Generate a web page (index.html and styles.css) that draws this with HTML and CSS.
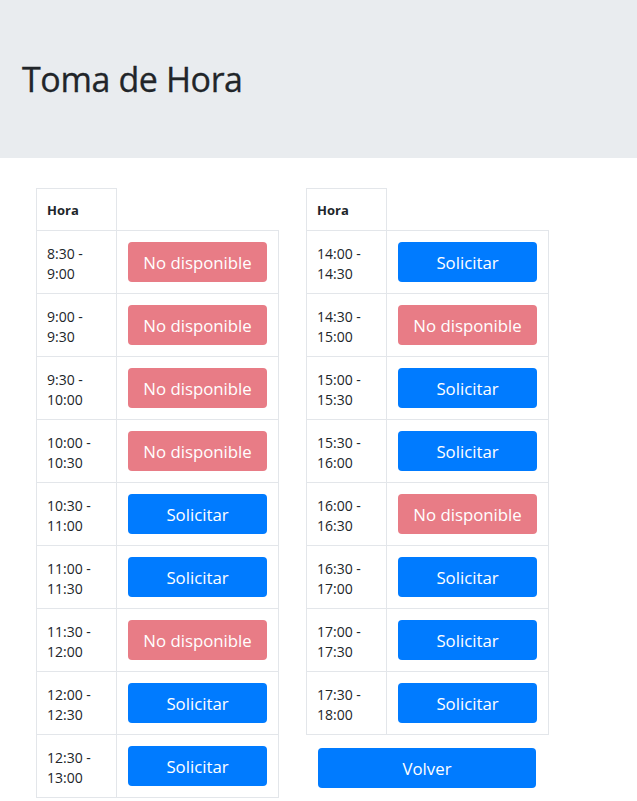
FILE: index.html
```html
<!DOCTYPE html>
<html lang="es">
<head>
<meta charset="utf-8">
<title>Toma de Hora</title>
<link rel="stylesheet" href="styles.css">
</head>
<body>
<header class="jumbo">
  <h1 class="title">Toma de Hora</h1>
</header>
<main class="content">
  <table class="slots">
    <colgroup><col class="c-time"><col class="c-act"></colgroup>
    <thead><tr><th>Hora</th></tr></thead>
    <tbody>
      <tr><td>8:30 - 9:00</td><td><button class="btn btn-off">No disponible</button></td></tr>
      <tr><td>9:00 - 9:30</td><td><button class="btn btn-off">No disponible</button></td></tr>
      <tr><td>9:30 - 10:00</td><td><button class="btn btn-off">No disponible</button></td></tr>
      <tr><td>10:00 - 10:30</td><td><button class="btn btn-off">No disponible</button></td></tr>
      <tr><td>10:30 - 11:00</td><td><button class="btn btn-on">Solicitar</button></td></tr>
      <tr><td>11:00 - 11:30</td><td><button class="btn btn-on">Solicitar</button></td></tr>
      <tr><td>11:30 - 12:00</td><td><button class="btn btn-off">No disponible</button></td></tr>
      <tr><td>12:00 - 12:30</td><td><button class="btn btn-on">Solicitar</button></td></tr>
      <tr><td>12:30 - 13:00</td><td><button class="btn btn-on">Solicitar</button></td></tr>
    </tbody>
  </table>
  <div class="right">
    <table class="slots">
      <colgroup><col class="c-time"><col class="c-act"></colgroup>
      <thead><tr><th>Hora</th></tr></thead>
      <tbody>
        <tr><td>14:00 - 14:30</td><td><button class="btn btn-on">Solicitar</button></td></tr>
        <tr><td>14:30 - 15:00</td><td><button class="btn btn-off">No disponible</button></td></tr>
        <tr><td>15:00 - 15:30</td><td><button class="btn btn-on">Solicitar</button></td></tr>
        <tr><td>15:30 - 16:00</td><td><button class="btn btn-on">Solicitar</button></td></tr>
        <tr><td>16:00 - 16:30</td><td><button class="btn btn-off">No disponible</button></td></tr>
        <tr><td>16:30 - 17:00</td><td><button class="btn btn-on">Solicitar</button></td></tr>
        <tr><td>17:00 - 17:30</td><td><button class="btn btn-on">Solicitar</button></td></tr>
        <tr><td>17:30 - 18:00</td><td><button class="btn btn-on">Solicitar</button></td></tr>
      </tbody>
    </table>
    <div class="back"><button class="btn btn-on btn-wide">Volver</button></div>
  </div>
</main>
</body>
</html>
```
FILE: styles.css
```css
* { box-sizing: border-box; }
html, body { margin: 0; padding: 0; }
body {
  font-family: "Open Sans", "Noto Sans", sans-serif;
  color: #212529;
  background: #fff;
}
.jumbo {
  background: #e9ecef;
  height: 158px;
  padding: 0 22px;
  display: flex;
  align-items: center;
}
.title {
  margin: 0;
  font-size: 34px;
  font-weight: 400;
  line-height: 1.2;
  letter-spacing: -0.4px;
  -webkit-text-stroke: 0.3px #212529;
}
.content {
  display: flex;
  align-items: flex-start;
  gap: 27px;
  padding: 30px 0 0 36px;
}
.slots {
  border-collapse: collapse;
  table-layout: fixed;
  width: 242px;
  font-size: 14px;
  line-height: 20px;
}
.c-time { width: 80px; }
.c-act { width: 162px; }
.slots th, .slots td {
  border: 1px solid #e3e6ea;
  padding: 11px;
  vertical-align: top;
  text-align: left;
}
.slots td:first-child { padding: 13px 8px 9px 10px; }
.slots th {
  font-weight: 700;
  font-size: 13px;
  padding: 11px 10px 10px 10px;
}
.btn {
  display: block;
  width: 139px;
  height: 40px;
  border: 0;
  border-radius: 4px;
  font-family: inherit;
  font-size: 16.8px;
  color: #fff;
  padding: 0;
  cursor: pointer;
}
.btn-on { background: #007bff; }
.btn-off { background: #e87c86; }
.back { padding: 13px 11px 0 12px; }
.btn-wide { width: 218px; }
```
